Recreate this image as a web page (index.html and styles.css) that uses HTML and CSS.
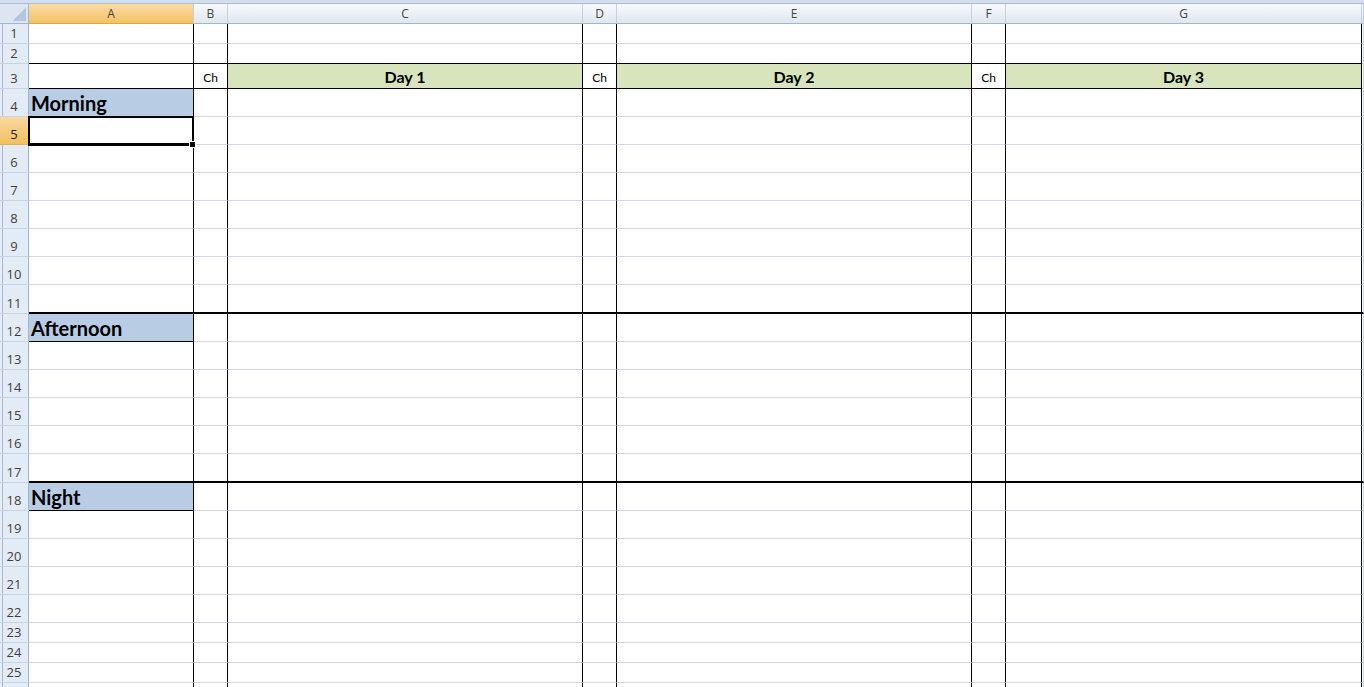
FILE: index.html
```html
<!DOCTYPE html>
<html lang="en">
<head>
    <meta charset="UTF-8">
    <title>Schedule</title>
    <link rel="stylesheet" href="styles.css">
</head>
<body>
    <div class="sheet">
        <div class="frame-top"></div>

        <div class="row head">
            <div class="corner"></div>
            <div class="on">A</div>
            <div>B</div>
            <div>C</div>
            <div>D</div>
            <div>E</div>
            <div>F</div>
            <div>G</div>
            <div></div>
        </div>

        <div class="row short"><div class="rh">1</div><div></div><div></div><div></div><div></div><div></div><div></div><div></div><div></div></div>
        <div class="row short rule"><div class="rh">2</div><div></div><div></div><div></div><div></div><div></div><div></div><div></div><div></div></div>

        <div class="row days rule">
            <div class="rh">3</div>
            <div></div>
            <div class="ch">Ch</div>
            <div class="day">Day 1</div>
            <div class="ch">Ch</div>
            <div class="day">Day 2</div>
            <div class="ch">Ch</div>
            <div class="day">Day 3</div>
            <div></div>
        </div>

        <!-- morning block -->
        <div class="row"><div class="rh">4</div><div class="label">Morning</div><div></div><div></div><div></div><div></div><div></div><div></div><div></div></div>
        <div class="row"><div class="rh on">5</div><div></div><div></div><div></div><div></div><div></div><div></div><div></div><div></div></div>
        <div class="row"><div class="rh">6</div><div></div><div></div><div></div><div></div><div></div><div></div><div></div><div></div></div>
        <div class="row"><div class="rh">7</div><div></div><div></div><div></div><div></div><div></div><div></div><div></div><div></div></div>
        <div class="row"><div class="rh">8</div><div></div><div></div><div></div><div></div><div></div><div></div><div></div><div></div></div>
        <div class="row"><div class="rh">9</div><div></div><div></div><div></div><div></div><div></div><div></div><div></div><div></div></div>
        <div class="row"><div class="rh">10</div><div></div><div></div><div></div><div></div><div></div><div></div><div></div><div></div></div>
        <div class="row end"><div class="rh">11</div><div></div><div></div><div></div><div></div><div></div><div></div><div></div><div></div></div>

        <!-- afternoon block -->
        <div class="row"><div class="rh">12</div><div class="label">Afternoon</div><div></div><div></div><div></div><div></div><div></div><div></div><div></div></div>
        <div class="row"><div class="rh">13</div><div></div><div></div><div></div><div></div><div></div><div></div><div></div><div></div></div>
        <div class="row"><div class="rh">14</div><div></div><div></div><div></div><div></div><div></div><div></div><div></div><div></div></div>
        <div class="row"><div class="rh">15</div><div></div><div></div><div></div><div></div><div></div><div></div><div></div><div></div></div>
        <div class="row"><div class="rh">16</div><div></div><div></div><div></div><div></div><div></div><div></div><div></div><div></div></div>
        <div class="row end"><div class="rh">17</div><div></div><div></div><div></div><div></div><div></div><div></div><div></div><div></div></div>

        <!-- night block -->
        <div class="row"><div class="rh">18</div><div class="label">Night</div><div></div><div></div><div></div><div></div><div></div><div></div><div></div></div>
        <div class="row"><div class="rh">19</div><div></div><div></div><div></div><div></div><div></div><div></div><div></div><div></div></div>
        <div class="row"><div class="rh">20</div><div></div><div></div><div></div><div></div><div></div><div></div><div></div><div></div></div>
        <div class="row"><div class="rh">21</div><div></div><div></div><div></div><div></div><div></div><div></div><div></div><div></div></div>
        <div class="row"><div class="rh">22</div><div></div><div></div><div></div><div></div><div></div><div></div><div></div><div></div></div>
        <div class="row short"><div class="rh">23</div><div></div><div></div><div></div><div></div><div></div><div></div><div></div><div></div></div>
        <div class="row short"><div class="rh">24</div><div></div><div></div><div></div><div></div><div></div><div></div><div></div><div></div></div>
        <div class="row short"><div class="rh">25</div><div></div><div></div><div></div><div></div><div></div><div></div><div></div><div></div></div>
        <div class="row short"><div class="rh"></div><div></div><div></div><div></div><div></div><div></div><div></div><div></div><div></div></div>

        <div class="selection"></div>
    </div>
</body>
</html>
```

FILE: styles.css
```css
body {
    margin: 0;
    overflow: hidden;
    background: #fff;
}

.sheet {
    position: relative;
    width: 1364px;
    height: 687px;
    overflow: hidden;
    font-family: Lato, "Liberation Sans", sans-serif;
    color: #000;
}

.frame-top {
    height: 3px;
    background: #d3dfee;
    border-bottom: 1px solid #a9bcd5;
}

/* rows and columns */
.row {
    display: flex;
    height: 28px;
}

.row.short {
    height: 20px;
}

.row.days {
    height: 25px;
}

.row.end {
    height: 29px;
}

.row > div {
    box-sizing: border-box;
    flex: none;
    border-bottom: 1px solid #d0d7e5;
    border-right: 1px solid #000;
}

.row > :nth-child(1) { width: 29px; }
.row > :nth-child(2) { width: 165px; }
.row > :nth-child(3),
.row > :nth-child(5),
.row > :nth-child(7) { width: 34px; }
.row > :nth-child(4),
.row > :nth-child(6) { width: 355px; }
.row > :nth-child(8) { width: 356px; }
.row > :nth-child(9) {
    flex: 1;
    border-right-color: #d0d7e5;
}

.row.rule > div:nth-child(n+2):nth-child(-n+8) {
    border-bottom-color: #000;
}

.row.end > div:not(.rh) {
    border-bottom: 2px solid #000;
}

/* column headers */
.row.head {
    height: 20px;
}

.row.head > div {
    background: linear-gradient(#f7f9fc, #e0e7f0);
    border-right: 1px solid #c6d1df;
    border-bottom: 1px solid #9eb6ce;
    font: 12px/19px "Open Sans", sans-serif;
    color: #454545;
    text-align: center;
}

.row.head > .on {
    background: linear-gradient(#fadca4, #f3c264);
    border-bottom-color: #e8a43c;
}

.row.head > .corner {
    position: relative;
    background: #dce6f3;
    border-right-color: #9eb6ce;
}

.corner::after {
    content: "";
    position: absolute;
    right: 2px;
    bottom: 2px;
    width: 14px;
    height: 14px;
    background: linear-gradient(to bottom right, transparent 50%, #b4c6de 50%);
}

/* row headers */
.row > .rh {
    display: flex;
    align-items: flex-end;
    justify-content: center;
    padding-bottom: 3px;
    background: linear-gradient(to right, #e6edf7 2px, #a6b9d3 2px 3px, #e3ebf6 3px);
    border-right: 1px solid #9eb6ce;
    border-bottom: 1px solid #c5d3e5;
    font: 13px/14px "Open Sans", sans-serif;
    color: #3f3f3f;
}

.row > .rh.on {
    background: linear-gradient(#f9d99f, #f1c15f);
    border-bottom-color: #e0b458;
    color: #222;
}

/* cell content */
.label {
    display: flex;
    align-items: flex-end;
    padding: 0 0 3px 2px;
    background: #b8cce4;
    font-size: 20px;
    line-height: 20px;
    font-weight: 700;
}

.row > .label {
    border-bottom-color: #000;
}

.day {
    display: flex;
    align-items: flex-end;
    justify-content: center;
    padding-bottom: 3px;
    background: #d7e4bc;
    font-size: 16px;
    line-height: 16px;
    font-weight: 700;
}

.ch {
    display: flex;
    align-items: flex-end;
    justify-content: center;
    padding-bottom: 4px;
    font-size: 12px;
    line-height: 12px;
}

/* active cell A5 */
.selection {
    position: absolute;
    left: 28px;
    top: 116px;
    width: 166px;
    height: 30px;
    box-sizing: border-box;
    border: 2px solid #000;
    border-bottom-width: 3px;
}

.selection::after {
    content: "";
    position: absolute;
    right: -4px;
    bottom: -5px;
    width: 5px;
    height: 5px;
    background: #000;
    border: 1px solid #fff;
}
```
